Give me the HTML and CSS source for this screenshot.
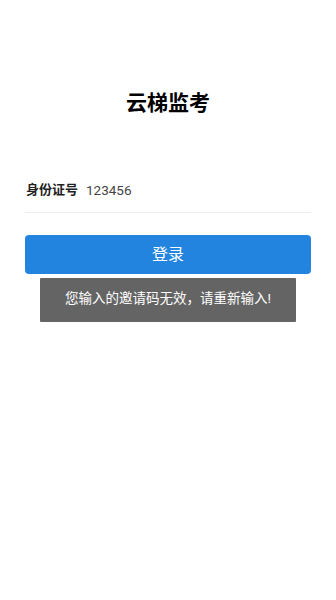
FILE: index.html
```html
<!DOCTYPE html>
<html lang="zh">
<head>
<meta charset="utf-8">
<link rel="stylesheet" href="styles.css">
</head>
<body>
<div class="page">
  <h1 class="title">云梯监考</h1>
  <div class="field">
    <span class="label">身份证号</span>
    <span class="value">123456</span>
  </div>
  <div class="actions">
    <button class="login">登录</button>
    <div class="toast">您输入的邀请码无效，请重新输入!</div>
  </div>
</div>
</body>
</html>
```
FILE: styles.css
```css
html, body {
  margin: 0;
  padding: 0;
  background: #ffffff;
  font-family: Roboto, "Noto Sans CJK SC", sans-serif;
}
.page {
  width: 336px;
  height: 600px;
  box-sizing: border-box;
  padding: 88px 25px 0 25px;
}
.title {
  margin: 0;
  height: 30px;
  line-height: 30px;
  font-size: 21px;
  font-weight: bold;
  text-align: center;
  color: #000000;
}
.field {
  margin-top: 62px;
  height: 20px;
  line-height: 20px;
  padding-bottom: 12px;
  display: flex;
  align-items: center;
  padding-left: 1px;
  border-bottom: 1px solid #eeeeee;
}
.label {
  font-size: 13px;
  font-weight: bold;
  color: #222222;
}
.value {
  margin-left: 8px;
  font-size: 13.5px;
  color: #444444;
}
.actions {
  margin-top: 22px;
  position: relative;
}
.login {
  display: block;
  width: 286px;
  height: 39px;
  border: none;
  border-radius: 4px;
  background: #2384df;
  color: #ffffff;
  font-family: Roboto, "Noto Sans CJK SC", sans-serif;
  font-size: 16px;
  padding: 0 0 3px 0;
}
.toast {
  position: absolute;
  left: 15px;
  top: 43px;
  width: 256px;
  height: 44px;
  line-height: 40px;
  background: #646464;
  border-radius: 1px;
  color: #ffffff;
  font-size: 13.5px;
  text-align: center;
}
```
